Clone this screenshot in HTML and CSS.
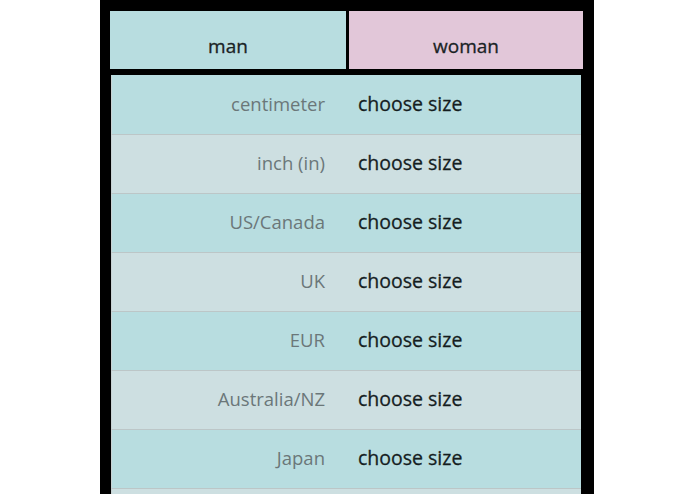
FILE: index.html
```html
<!DOCTYPE html>
<html lang="en">
<head>
<meta charset="utf-8">
<title>Size chart</title>
<link rel="stylesheet" href="styles.css">
</head>
<body>
<div class="panel">
  <div class="tabs">
    <div class="tab tab-man">man</div>
    <div class="tab tab-woman">woman</div>
  </div>
  <div class="rows">
    <div class="row row-a"><div class="label">centimeter</div><div class="value">choose size</div></div>
    <div class="row row-b"><div class="label">inch (in)</div><div class="value">choose size</div></div>
    <div class="row row-a"><div class="label">US/Canada</div><div class="value">choose size</div></div>
    <div class="row row-b"><div class="label">UK</div><div class="value">choose size</div></div>
    <div class="row row-a"><div class="label">EUR</div><div class="value">choose size</div></div>
    <div class="row row-b"><div class="label">Australia/NZ</div><div class="value">choose size</div></div>
    <div class="row row-a"><div class="label">Japan</div><div class="value">choose size</div></div>
    <div class="row row-b"></div>
  </div>
</div>
</body>
</html>
```
FILE: styles.css
```css
html, body {
  margin: 0;
  padding: 0;
  background: #ffffff;
  height: 494px;
  overflow: hidden;
}
body {
  font-family: "Open Sans", "DejaVu Sans", sans-serif;
}
.panel {
  margin-left: 100px;
  width: 494px;
  box-sizing: border-box;
  background: #000000;
  padding: 11px 11px 0 10px;
  min-height: 600px;
}
.tabs {
  display: grid;
  grid-template-columns: 236px 234px;
  column-gap: 3px;
  height: 58px;
}
.tab {
  text-align: center;
  font-size: 19px;
  line-height: 24px;
  padding-top: 23px;
  box-sizing: border-box;
  color: #1a2325;
  -webkit-text-stroke: 0.3px #1a2325;
}
.tab-man {
  background: #b8dde0;
}
.tab-woman {
  background: #e2c7d9;
}
.rows {
  margin: 6px 2px 0 1px;
  display: flex;
  flex-direction: column;
}
.row {
  display: flex;
  align-items: center;
  height: 59px;
  padding-bottom: 3px;
  box-sizing: border-box;
  border-top: 1px solid #bcc6c7;
  border-left: 1px solid #c8d2d3;
  line-height: 24px;
}
.row:first-child {
  border-top-color: #b8dde0;
}
.row-a {
  background: #b8dde0;
}
.row-b {
  background: #cddfe1;
}
.label {
  width: 229px;
  padding-right: 16px;
  box-sizing: border-box;
  text-align: right;
  font-size: 18.5px;
  color: #6b7779;
}
.value {
  padding-left: 17px;
  font-size: 19.5px;
  color: #151d1f;
  -webkit-text-stroke: 0.3px #151d1f;
}
```
